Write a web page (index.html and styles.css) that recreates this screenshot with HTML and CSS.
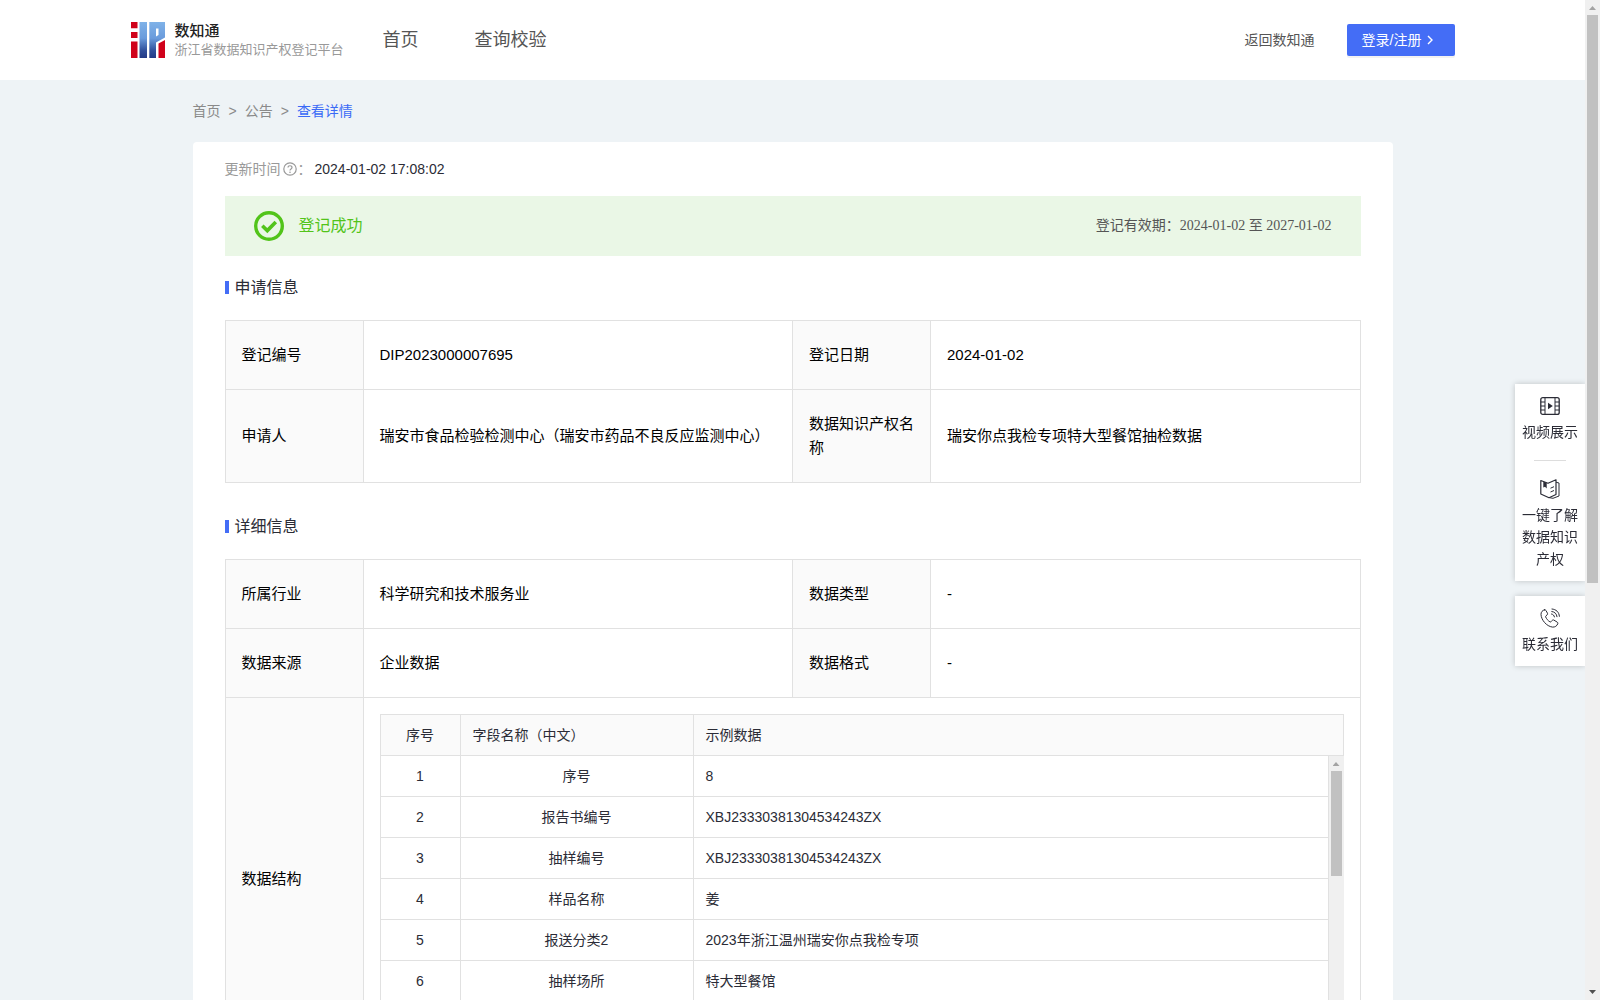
FILE: index.html
```html
<!DOCTYPE html>
<html lang="zh-CN">
<head>
<meta charset="utf-8">
<title>浙江省数据知识产权登记平台</title>
<meta name="viewport" content="width=device-width, initial-scale=1">
<link rel="stylesheet" href="styles.css">
</head>
<body>
<div class="page">
  <header class="header">
    <div class="header-inner">
      <a class="brand" href="#">
        <svg class="brand-logo" viewBox="0 0 34 36" aria-hidden="true">
          <defs>
            <linearGradient id="blue" x1="0" y1="0" x2="0" y2="36" gradientUnits="userSpaceOnUse">
              <stop offset="0" stop-color="#7fb2e8"/><stop offset=".45" stop-color="#6a9bdc"/><stop offset=".8" stop-color="#2f4e9a"/><stop offset="1" stop-color="#233a86"/>
            </linearGradient>
          </defs>
          <path fill="#d0021b" d="M0 0h6.500v6.300H0zM0 10h6.500v6H0zM0 19.500h6.500V36H0zM27.500 21.500 34 18v18h-6.500z"/>
          <path fill="url(#blue)" d="M8.500 0H16v36H8.500zM18.300 0H34v15.500L25 20.500V36h-6.700z"/>
          <path fill="#fff" d="M25 6.500h2.500v6.500L25 14.500z"/>
        </svg>
        <span class="brand-text">
          <strong class="brand-name">数知通</strong>
          <span class="brand-sub">浙江省数据知识产权登记平台</span>
        </span>
      </a>
      <nav class="nav">
        <a href="#">首页</a>
        <a href="#">查询校验</a>
      </nav>
      <a class="back-link" href="#">返回数知通</a>
      <button class="login" type="button">登录/注册
        <svg viewBox="0 0 8 10" aria-hidden="true"><path d="M2 1l4 4-4 4" fill="none" stroke="currentColor" stroke-width="1.400"/></svg>
      </button>
    </div>
  </header>

  <main class="main">
    <nav class="crumbs">
      <a href="#">首页</a><span>&gt;</span><a href="#">公告</a><span>&gt;</span><a class="current" href="#">查看详情</a>
    </nav>

    <div class="card">
      <div class="updated">
        <span>更新时间</span>
        <svg viewBox="0 0 14 14" aria-hidden="true"><g fill="none" stroke="currentColor" stroke-width="1.200"><circle cx="7" cy="7" r="6.200"/><path d="M5 5.600C5 3.100 9 3.200 9 5.500c0 1.500-2 1.400-2 3"/></g><circle cx="7" cy="10.300" r=".8" fill="currentColor"/></svg>
        <span>：</span>
        <time>2024-01-02 17:08:02</time>
      </div>

      <div class="banner">
        <svg viewBox="0 0 30 30" aria-hidden="true"><g fill="none" stroke="currentColor"><circle cx="15" cy="15" r="13.300" stroke-width="3.400"/><path d="M8.300 14.800l5 4.800 8.500-8.600" stroke-width="3.600"/></g></svg>
        <span class="banner-state">登记成功</span>
        <span class="banner-term">登记有效期：2024-01-02 至 2027-01-02</span>
      </div>

      <h2 class="section-title">申请信息</h2>
      <table class="info">
        <colgroup><col class="col-label"><col><col class="col-label"><col></colgroup>
        <tbody>
          <tr><th scope="row">登记编号</th><td>DIP2023000007695</td><th scope="row">登记日期</th><td>2024-01-02</td></tr>
          <tr><th scope="row">申请人</th><td>瑞安市食品检验检测中心（瑞安市药品不良反应监测中心）</td><th scope="row">数据知识产权名称</th><td>瑞安你点我检专项特大型餐馆抽检数据</td></tr>
        </tbody>
      </table>

      <h2 class="section-title">详细信息</h2>
      <table class="info">
        <colgroup><col class="col-label"><col><col class="col-label"><col></colgroup>
        <tbody>
          <tr><th scope="row">所属行业</th><td>科学研究和技术服务业</td><th scope="row">数据类型</th><td>-</td></tr>
          <tr><th scope="row">数据来源</th><td>企业数据</td><th scope="row">数据格式</th><td>-</td></tr>
          <tr>
            <th scope="row">数据结构</th>
            <td class="nest" colspan="3">
              <div class="fields">
                <table class="grid grid-head">
                  <colgroup><col class="col-no"><col class="col-name"><col></colgroup>
                  <thead><tr><th scope="col">序号</th><th scope="col">字段名称（中文）</th><th scope="col">示例数据</th></tr></thead>
                </table>
                <div class="grid-scroll">
                  <table class="grid">
                    <colgroup><col class="col-no"><col class="col-name"><col></colgroup>
                    <tbody>
                      <tr><td>1</td><td>序号</td><td>8</td></tr>
                      <tr><td>2</td><td>报告书编号</td><td>XBJ23330381304534243ZX</td></tr>
                      <tr><td>3</td><td>抽样编号</td><td>XBJ23330381304534243ZX</td></tr>
                      <tr><td>4</td><td>样品名称</td><td>姜</td></tr>
                      <tr><td>5</td><td>报送分类2</td><td>2023年浙江温州瑞安你点我检专项</td></tr>
                      <tr><td>6</td><td>抽样场所</td><td>特大型餐馆</td></tr>
                    </tbody>
                  </table>
                  <div class="scrollbar" aria-hidden="true"><i class="arrow up"></i><i class="thumb thumb-grid"></i><i class="arrow down"></i></div>
                </div>
              </div>
            </td>
          </tr>
        </tbody>
      </table>
    </div>
  </main>
</div>

<aside class="float">
  <div class="float-card">
    <a href="#">
      <svg viewBox="0 0 20 20" aria-hidden="true"><g fill="none" stroke="currentColor"><rect x=".8" y="1.600" width="18.400" height="16.800" rx="2" stroke-width="1.300"/><path d="M5 1.600v16.800M15 1.600v16.800M.8 6H5M.8 10H5M.8 14H5M15 6h4.200M15 10h4.200M15 14h4.200"/></g><path d="M8 6.800v6.400l4.800-3.200z" fill="currentColor"/></svg>
      <span>视频展示</span>
    </a>
    <hr>
    <a href="#">
      <svg viewBox="0 0 20 20" aria-hidden="true"><g fill="none" stroke="currentColor" stroke-linejoin="round"><path d="M.8 1.500 8 4.300 16 .8v14.700l-7 3.200-8.200-3.700z" stroke-width="1.200"/><path d="M16 3.200l3 .8v13l-6 2.300-3.500-.6M10.500 9.200l3.500-1.500M10.500 13l3.500-1.500"/></g><path d="M3.300 2.400l3.400 1.300v5.800L5 7.800 3.300 8.400z" fill="currentColor"/></svg>
      <span>一键了解<br>数据知识<br>产权</span>
    </a>
  </div>
  <div class="float-card">
    <a href="#">
      <svg viewBox="0 0 20 20" aria-hidden="true"><g fill="none" stroke="currentColor" stroke-linejoin="round" stroke-linecap="round"><path d="M4.500 1.800C2.500 2.300.9 4 1 6.500c.3 5.500 5.500 11.800 11.500 12.600 2.500.2 4.500-1.200 5.300-3.400.2-.7 0-1.200-.6-1.600l-3.300-2c-.7-.4-1.300-.2-1.700.3l-1 1.200c-.4.4-.8.500-1.300.2-2-1.200-3.300-2.800-4.200-4.800-.2-.5-.1-.9.300-1.200l1.100-.9c.5-.4.700-1 .4-1.600L5.900 2.400c-.3-.6-.8-.8-1.400-.6z"/><path d="M11.500 6c1.600.3 2.600 1.300 2.900 2.900M11.800 3.500c3 .4 4.800 2.200 5.200 5.200M12 1c4.300.4 7 3 7.400 7.300"/></g></svg>
      <span>联系我们</span>
    </a>
  </div>
</aside>

<div class="scrollbar scrollbar-page" aria-hidden="true"><i class="arrow up"></i><i class="thumb thumb-page"></i><i class="arrow down dark"></i></div>
</body>
</html>
```

FILE: styles.css
```css
* {
  box-sizing: border-box;
}

html {
  scrollbar-width: none;
}

body {
  margin: 0;
  padding-right: 15px;
  background: #eef3f6;
  color: #2b2c36;
  font: 14px/22px "Liberation Sans", "Noto Sans CJK SC", sans-serif;
}

a {
  color: inherit;
  text-decoration: none;
}

svg {
  display: block;
  flex: none;
}

/* header */
.header {
  background: #fff;
}

.header-inner {
  display: flex;
  align-items: center;
  max-width: 1324px;
  height: 80px;
  margin: 0 auto;
  color: #555;
}

.brand {
  display: flex;
  align-items: center;
  gap: 10px;
  width: 252px;
}

.brand-logo {
  width: 34px;
  height: 36px;
}

.brand-text {
  display: flex;
  flex-direction: column;
  white-space: nowrap;
}

.brand-name {
  color: #222;
  font-size: 15px;
  font-weight: 500;
  line-height: 20px;
}

.brand-sub {
  color: #999;
  font-size: 13px;
  line-height: 18px;
}

.nav {
  display: flex;
  gap: 56px;
  margin-right: auto;
  font-size: 18px;
}

.back-link {
  margin-right: 32px;
}

.login {
  display: flex;
  align-items: center;
  gap: 5px;
  width: 108px;
  height: 32px;
  padding: 0 15px;
  border: 0;
  border-radius: 2px;
  background: #446df6;
  box-shadow: 0 2px 0 rgba(0, 0, 0, 0.05);
  color: #fff;
  font: inherit;
  white-space: nowrap;
}

.login svg {
  width: 8px;
  height: 10px;
}

/* content */
.main {
  max-width: 1200px;
  margin: 0 auto;
  padding: 20px 0 40px;
}

.crumbs {
  display: flex;
  gap: 8px;
  margin-bottom: 20px;
  color: #8a8a8a;
}

.crumbs .current {
  color: #3a6af6;
}

.card {
  padding: 16px 32px 32px;
  border-radius: 4px;
  background: #fff;
}

.updated {
  display: flex;
  align-items: center;
  color: #999;
}

.updated svg {
  width: 14px;
  height: 14px;
  margin: 0 1px 0 2px;
}

.updated time {
  margin-left: 3px;
  color: #2b2c36;
}

.banner {
  display: flex;
  align-items: center;
  gap: 15px;
  height: 60px;
  margin: 16px 0 20px;
  padding: 0 29px;
  background: #eaf7e6;
  color: #52c41a;
}

.banner svg {
  width: 30px;
  height: 30px;
}

.banner-state {
  font-size: 16px;
}

.banner-term {
  margin-left: auto;
  color: #555;
  font-family: "Liberation Serif", "Noto Sans CJK SC", serif;
}

.section-title {
  display: flex;
  align-items: center;
  gap: 6px;
  margin: 0 0 21px;
  font-size: 16px;
  font-weight: 400;
  line-height: 23px;
}

.section-title::before {
  width: 4px;
  height: 13px;
  background: #446df6;
  content: "";
}

.info {
  width: 100%;
  margin-bottom: 32px;
  border-collapse: collapse;
  table-layout: fixed;
  color: #000;
  font-size: 15px;
  line-height: 24px;
}

.col-label {
  width: 138px;
}

.info > tbody > tr > th,
.info > tbody > tr > td {
  padding: 22px 15px 22px 16px;
  border: 1px solid #e1e1e1;
  font-weight: 400;
  text-align: left;
}

.info > tbody > tr > th {
  background: #fafafa;
}

.info > tbody > tr > .nest {
  padding: 16px;
}

/* field list */
.fields {
  border: solid #e1e1e1;
  border-width: 1px 0 0 1px;
}

.grid {
  flex: 1;
  width: 100%;
  border-spacing: 0;
  table-layout: fixed;
  color: #2b2c36;
  font-size: 14px;
  line-height: 22px;
}

.col-no {
  width: 80px;
}

.col-name {
  width: 233px;
}

.grid th,
.grid td {
  height: 41px;
  padding: 9px 12px;
  border: solid #e1e1e1;
  border-width: 0 1px 1px 0;
  font-weight: 400;
  text-align: left;
}

.grid-head {
  background: #fafafa;
}

.grid th:first-child,
.grid td:first-child,
.grid td:nth-child(2) {
  text-align: center;
}

.grid-scroll {
  display: flex;
  align-items: flex-start;
  min-height: 288px;
}

/* scrollbars */
.scrollbar {
  display: flex;
  flex: none;
  flex-direction: column;
  align-items: center;
  align-self: stretch;
  width: 15px;
  background: #f0f0f0;
}

.scrollbar-page {
  position: fixed;
  top: 0;
  right: 0;
  bottom: 0;
}

.arrow {
  width: 7px;
  height: 4px;
  margin: 6px 0 5px;
  background: #a3a3a3;
  clip-path: polygon(50% 0, 100% 100%, 0 100%);
}

.arrow.down {
  margin: auto 0 6px;
  clip-path: polygon(0 0, 100% 0, 50% 100%);
}

.arrow.dark {
  background: #505050;
}

.thumb {
  width: 11px;
  background: #c1c1c1;
}

.thumb-grid {
  height: 105px;
}

.thumb-page {
  height: 568px;
}

/* floating shortcuts */
.float {
  position: fixed;
  top: 384px;
  right: 15px;
  display: flex;
  flex-direction: column;
  gap: 15px;
  width: 70px;
  text-align: center;
}

.float-card {
  padding: 12px 0 11px;
  background: #fff;
  box-shadow: 0 0 6px rgba(0, 0, 0, 0.2);
}

.float-card a {
  display: flex;
  flex-direction: column;
  align-items: center;
  gap: 5px;
}

.float-card svg {
  width: 20px;
  height: 20px;
}

.float-card hr {
  width: 32px;
  height: 1px;
  margin: 17px auto 18px;
  border: 0;
  background: #ddd;
}
```
